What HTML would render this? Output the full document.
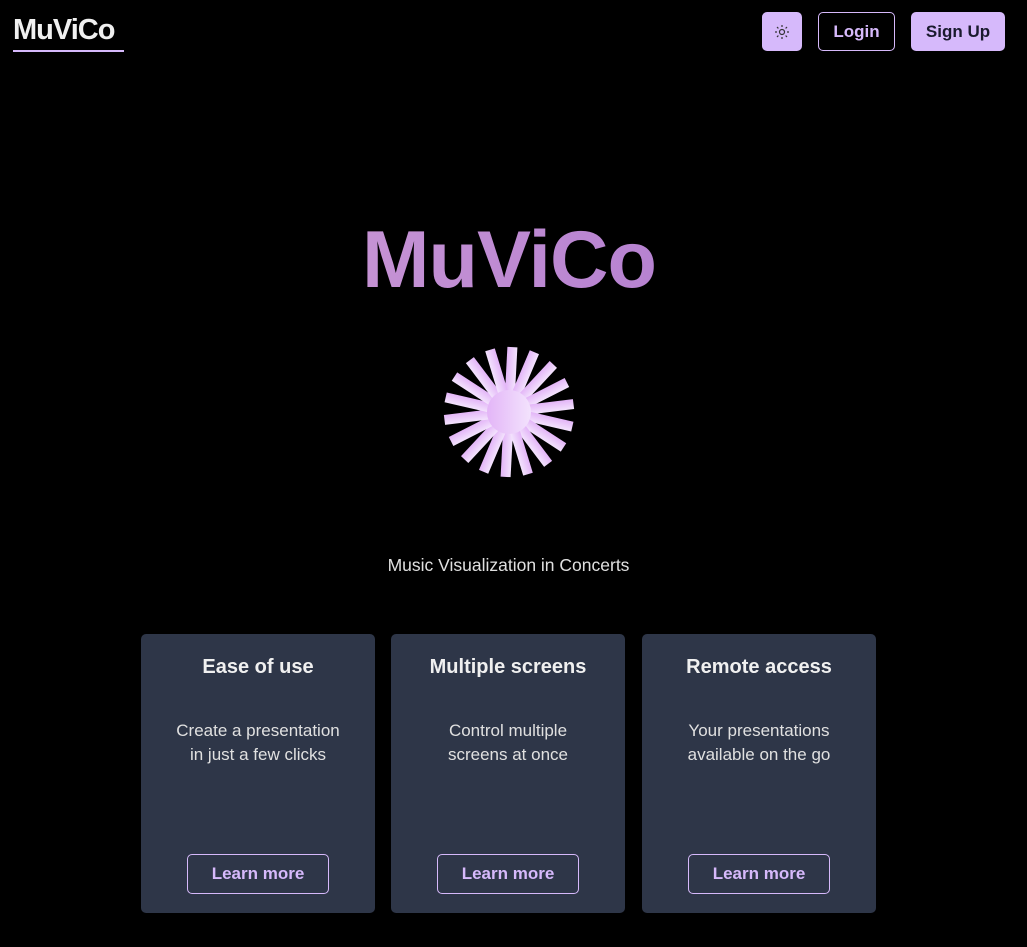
<!DOCTYPE html>
<html><head><style>
body{margin:0;background:#000;width:1027px;height:947px;overflow:hidden;font-family:"Liberation Sans",sans-serif;position:relative;color:#eee}
.logo{position:absolute;left:13px;top:14px;font-size:29px;font-weight:bold;color:#f0f0f0;letter-spacing:-1px;border-bottom:2px solid #d6b9fb;padding-bottom:3px;width:111px}
.btn{position:absolute;top:12px;height:39px;border-radius:5px;box-sizing:border-box;font-weight:bold;font-size:17px;display:flex;align-items:center;justify-content:center;color:#1a1a2e}
h1{position:absolute;left:0;width:1018px;top:214px;margin:0;text-align:center;font-size:81px;letter-spacing:-1px;background:linear-gradient(90deg,#d7a6d8,#a56fcd);-webkit-background-clip:text;background-clip:text;color:transparent}
.sub{position:absolute;top:555px;width:1017px;text-align:center;font-size:17.5px;color:#e0e0e0}
.card{position:absolute;top:634px;width:234px;height:279px;background:#2e3648;border-radius:5px;text-align:center}
.card h3{margin:22px 0 0;font-size:20px;color:#f0f0f0}
.card p{margin:40px 10px 0;font-size:17px;line-height:24px;color:#e0e0e0}
.card a{position:absolute;left:46px;top:220px;width:142px;height:40px;box-sizing:border-box;border:1px solid #d6b9fb;border-radius:5px;color:#d6b9fb;font-weight:bold;font-size:17px;line-height:38px;text-decoration:none}
</style></head><body>
<div class="logo">MuViCo</div>
<div class="btn" style="left:762px;width:40px;background:#d6b9fb"><svg width="14" height="14" viewBox="0 0 14 14" stroke="#333" fill="none" stroke-width="1.2"><circle cx="7" cy="7" r="2.5"/><path d="M7 0v2M7 12v2M0 7h2M12 7h2M2 2l1.4 1.4M10.6 10.6L12 12M2 12l1.4-1.4M10.6 3.4L12 2"/></svg></div>
<div class="btn" style="left:818px;width:77px;border:1px solid #d6b9fb;color:#d6b9fb">Login</div>
<div class="btn" style="left:911px;width:94px;background:#d6b9fb">Sign Up</div>
<h1>MuViCo</h1>
<svg style="position:absolute;left:439px;top:342px" width="140" height="140" viewBox="-70 -70 140 140">
<defs><linearGradient id="g" x1="0" x2="1"><stop offset="0" stop-color="#e3b5f7"/><stop offset="1" stop-color="#f3e3fd"/></linearGradient></defs>
<g fill="url(#g)">
<rect x="-5" y="-65" width="10" height="130" transform="rotate(3)"/>
<rect x="-5" y="-65" width="10" height="130" transform="rotate(23)"/>
<rect x="-5" y="-65" width="10" height="130" transform="rotate(43)"/>
<rect x="-5" y="-65" width="10" height="130" transform="rotate(63)"/>
<rect x="-5" y="-65" width="10" height="130" transform="rotate(83)"/>
<rect x="-5" y="-65" width="10" height="130" transform="rotate(103)"/>
<rect x="-5" y="-65" width="10" height="130" transform="rotate(123)"/>
<rect x="-5" y="-65" width="10" height="130" transform="rotate(143)"/>
<rect x="-5" y="-65" width="10" height="130" transform="rotate(163)"/>
<circle r="22"/>
</g></svg>
<div class="sub">Music Visualization in Concerts</div>
<div class="card" style="left:141px"><h3>Ease of use</h3><p>Create a presentation<br>in just a few clicks</p><a>Learn more</a></div>
<div class="card" style="left:391px"><h3>Multiple screens</h3><p>Control multiple<br>screens at once</p><a>Learn more</a></div>
<div class="card" style="left:642px"><h3>Remote access</h3><p>Your presentations<br>available on the go</p><a>Learn more</a></div>
</body></html>
